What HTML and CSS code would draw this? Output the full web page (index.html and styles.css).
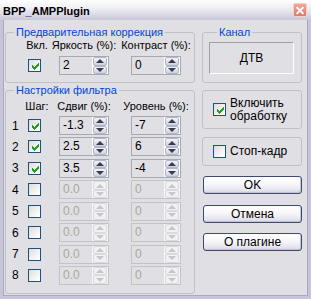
FILE: index.html
```html
<!DOCTYPE html>
<html>
<head>
<meta charset="utf-8">
<link rel="stylesheet" href="styles.css">
</head>
<body>
<div class="window">
  <div class="titlebar">
    <span class="title">BPP_AMPPlugin</span>
    <span class="close"><svg width="13" height="13" viewBox="0 0 13 13"><path d="M3.5 3.5l6 6M9.5 3.5l-6 6" stroke="#fff" stroke-width="2" stroke-linecap="square"/></svg></span>
  </div>
  <div class="client">
    <div class="left">
      <fieldset class="group g1">
        <legend>Предварительная коррекция</legend>
        <div class="cols hdr">
          <span class="c2"><span class="hc">Вкл.</span></span>
          <span class="c3"><span class="he">Яркость (%):</span></span>
          <span class="c4"><span class="he">Контраст (%):</span></span>
        </div>
        <div class="cols row">
          <span class="c2"><span class="chk on"></span></span>
          <span class="c3"><span class="edit"><span class="val">2</span><span class="ud"><span class="b up"></span><span class="b dn"></span></span></span></span>
          <span class="c4"><span class="edit"><span class="val">0</span><span class="ud"><span class="b up"></span><span class="b dn"></span></span></span></span>
        </div>
      </fieldset>
      <fieldset class="group g2">
        <legend>Настройки фильтра</legend>
        <div class="cols hdr">
          <span class="c2"><span class="hc">Шаг:</span></span>
          <span class="c3"><span class="he">Сдвиг (%):</span></span>
          <span class="c4"><span class="he">Уровень (%):</span></span>
        </div>
        <div class="rows">
          <div class="cols row"><span class="num">1</span><span class="c2"><span class="chk on"></span></span><span class="c3"><span class="edit"><span class="val">-1.3</span><span class="ud"><span class="b up"></span><span class="b dn"></span></span></span></span><span class="c4"><span class="edit"><span class="val">-7</span><span class="ud"><span class="b up"></span><span class="b dn"></span></span></span></span></div>
          <div class="cols row"><span class="num">2</span><span class="c2"><span class="chk on"></span></span><span class="c3"><span class="edit"><span class="val">2.5</span><span class="ud"><span class="b up"></span><span class="b dn"></span></span></span></span><span class="c4"><span class="edit"><span class="val">6</span><span class="ud"><span class="b up"></span><span class="b dn"></span></span></span></span></div>
          <div class="cols row"><span class="num">3</span><span class="c2"><span class="chk on"></span></span><span class="c3"><span class="edit"><span class="val">3.5</span><span class="ud"><span class="b up"></span><span class="b dn"></span></span></span></span><span class="c4"><span class="edit"><span class="val">-4</span><span class="ud"><span class="b up"></span><span class="b dn"></span></span></span></span></div>
          <div class="cols row"><span class="num">4</span><span class="c2"><span class="chk"></span></span><span class="c3"><span class="edit dis"><span class="val">0.0</span><span class="ud"><span class="b up"></span><span class="b dn"></span></span></span></span><span class="c4"><span class="edit dis"><span class="val">0</span><span class="ud"><span class="b up"></span><span class="b dn"></span></span></span></span></div>
          <div class="cols row"><span class="num">5</span><span class="c2"><span class="chk"></span></span><span class="c3"><span class="edit dis"><span class="val">0.0</span><span class="ud"><span class="b up"></span><span class="b dn"></span></span></span></span><span class="c4"><span class="edit dis"><span class="val">0</span><span class="ud"><span class="b up"></span><span class="b dn"></span></span></span></span></div>
          <div class="cols row"><span class="num">6</span><span class="c2"><span class="chk"></span></span><span class="c3"><span class="edit dis"><span class="val">0.0</span><span class="ud"><span class="b up"></span><span class="b dn"></span></span></span></span><span class="c4"><span class="edit dis"><span class="val">0</span><span class="ud"><span class="b up"></span><span class="b dn"></span></span></span></span></div>
          <div class="cols row"><span class="num">7</span><span class="c2"><span class="chk"></span></span><span class="c3"><span class="edit dis"><span class="val">0.0</span><span class="ud"><span class="b up"></span><span class="b dn"></span></span></span></span><span class="c4"><span class="edit dis"><span class="val">0</span><span class="ud"><span class="b up"></span><span class="b dn"></span></span></span></span></div>
          <div class="cols row"><span class="num">8</span><span class="c2"><span class="chk"></span></span><span class="c3"><span class="edit dis"><span class="val">0.0</span><span class="ud"><span class="b up"></span><span class="b dn"></span></span></span></span><span class="c4"><span class="edit dis"><span class="val">0</span><span class="ud"><span class="b up"></span><span class="b dn"></span></span></span></span></div>
        </div>
      </fieldset>
    </div>
    <div class="right">
      <fieldset class="group gk">
        <legend>Канал</legend>
        <div class="panel">ДТВ</div>
      </fieldset>
      <div class="box bx1">
        <span class="chk on"></span>
        <span class="lbl">Включить<br>обработку</span>
      </div>
      <div class="box bx2">
        <span class="chk"></span>
        <span class="lbl">Стоп-кадр</span>
      </div>
      <div class="btns">
        <span class="btn">OK</span>
        <span class="btn">Отмена</span>
        <span class="btn">О плагине</span>
      </div>
    </div>
  </div>
</div>
</body>
</html>
```
FILE: styles.css
```css
* { box-sizing: border-box; }
html, body { margin: 0; padding: 0; background: #e0dfe3; }
body { font-family: "Liberation Sans", Arial, sans-serif; font-size: 11px; color: #000; }
.window { width: 311px; height: 299px; display: flex; flex-direction: column; overflow: hidden; }
.titlebar {
  height: 20px; flex: none; display: flex; align-items: center; justify-content: space-between;
  padding: 0 4px 0 3px;
  background: linear-gradient(#ffffff 0%, #f2f2f7 35%, #d9d8e6 75%, #c8c7d9 100%);
}
.title { font-weight: bold; font-size: 11px; padding-top: 1px; }
.close {
  width: 14px; height: 14px; display: flex; align-items: center; justify-content: center;
  background: linear-gradient(#f0a89a, #e07868); border: 1px solid #f6d0c8; border-radius: 2px;
}
.client {
  flex: 1; display: flex; gap: 7px; padding: 6px 6px 0 2px;
  border: 3px solid #c6c5d7; border-top: 0;
  box-shadow: inset 1px 0 0 #a9a8bd, inset -1px 0 0 #a9a8bd, inset 0 -1px 0 #a9a8bd;
}
.left { width: 190px; display: flex; flex-direction: column; }
.right { width: 100px; display: flex; flex-direction: column; }
.group {
  margin: 0; padding: 0; min-width: 0;
  border: 1px solid #c2c1c9; border-radius: 3px;
}
legend { padding: 0 2px; margin-left: 8px; color: #0046d5; line-height: 13px; }
.g1 { padding-bottom: 7px; }
.g2 { margin-top: 1px; padding-top: 3px; padding-bottom: 8px; }
.cols { display: grid; grid-template-columns: 22px 31px 72px 1fr; align-items: center; }
.hdr { height: 13px; line-height: 13px; white-space: nowrap; }
.g1 .hdr { margin-bottom: 4px; }
.g2 .hdr { margin-bottom: 3px; }
.hdr .c2 { grid-column: 2; }
.hdr .c3 { grid-column: 3; }
.hdr .c4 { grid-column: 4; }
.row { height: 19px; }
.row .c2 { grid-column: 2; display: flex; }
.row .c3 { grid-column: 3; display: flex; }
.row .c4 { grid-column: 4; display: flex; }
.rows { display: flex; flex-direction: column; gap: 2.43px; }
.num { grid-column: 1; padding-left: 6px; }
.hc { display: flex; justify-content: center; width: 18px; }
.he { display: flex; justify-content: center; width: 50px; }
.chk {
  width: 13px; height: 13px; border: 1px solid #1c5180; flex: none;
  background: linear-gradient(135deg, #dcdcd7 0%, #ffffff 90%);
  position: relative;
}
.chk.on::after {
  content: ""; position: absolute; left: 1px; top: 1px; width: 11px; height: 11px;
  background: url("data:image/svg+xml,%3Csvg xmlns='http://www.w3.org/2000/svg' width='11' height='11' shape-rendering='crispEdges'%3E%3Cpath fill='%2321a121' d='M8 2h1v1H8zM7 3h2v1H7zM2 4h1v1H2zM6 4h3v1H6zM2 5h2v1H2zM5 5h3v1H5zM2 6h5v1H2zM3 7h3v1H3zM4 8h1v1H4z'/%3E%3C/svg%3E") no-repeat;
}
.edit {
  width: 50px; height: 19px; border: 1px solid #a5a9b3; display: flex; align-items: center;
  background: #e0dfe3;
}
.val { flex: 1; padding-left: 3px; line-height: 17px; font-size: 12px; }
.ud { width: 16px; height: 17px; background: #fff; display: flex; flex-direction: column; padding: 0 1px 0 1px; }
.b {
  flex: 1; border: 1px solid #b1b6cb; border-radius: 2px; position: relative;
  background: linear-gradient(#f3f4f9, #cdd1e2);
}
.b::after {
  content: ""; position: absolute; left: 50%; top: 50%; width: 0; height: 0;
  margin-left: -4px; border-left: 4px solid transparent; border-right: 4px solid transparent;
}
.up::after { margin-top: -2px; border-bottom: 4px solid #3b3b4a; }
.dn::after { margin-top: -2px; border-top: 4px solid #3b3b4a; }
.dis { border-color: #c3c2c8; color: #aca899; }
.dis .ud { background: #f6f6f6; }
.dis .b { border-color: #d9d9de; background: #f1f1f3; }
.dis .up::after { border-bottom-color: #c6c6cc; }
.dis .dn::after { border-top-color: #c6c6cc; }
.gk { padding: 3px 7px 8px 6px; }
.panel {
  height: 32px; display: flex; align-items: center; justify-content: center;
  border: 1px solid; border-color: #a0a0a8 #ffffff #ffffff #a0a0a8; font-size: 12px;
}
.box {
  border: 1px solid #c2c1c9; border-radius: 3px; display: flex; align-items: center;
  padding-left: 10px; gap: 4px;
}
.bx1 { margin-top: 7px; height: 39px; }
.bx2 { margin-top: 8px; height: 29px; }
.lbl { line-height: 13px; font-size: 12px; }
.num { font-size: 12px; }
.btns { display: flex; flex-direction: column; margin-top: 10px; gap: 10.5px; padding-left: 1px; }
.btn {
  height: 18px; display: flex; align-items: center; justify-content: center;
  border: 1px solid #3c4a72; border-radius: 3px;
  background: linear-gradient(#ffffff 0%, #f7f7fa 45%, #e4e3ec 85%, #cfcedc 100%);
  box-shadow: inset -1px -1px 0 #c5c4d4;
  font-size: 12px;
}
```
